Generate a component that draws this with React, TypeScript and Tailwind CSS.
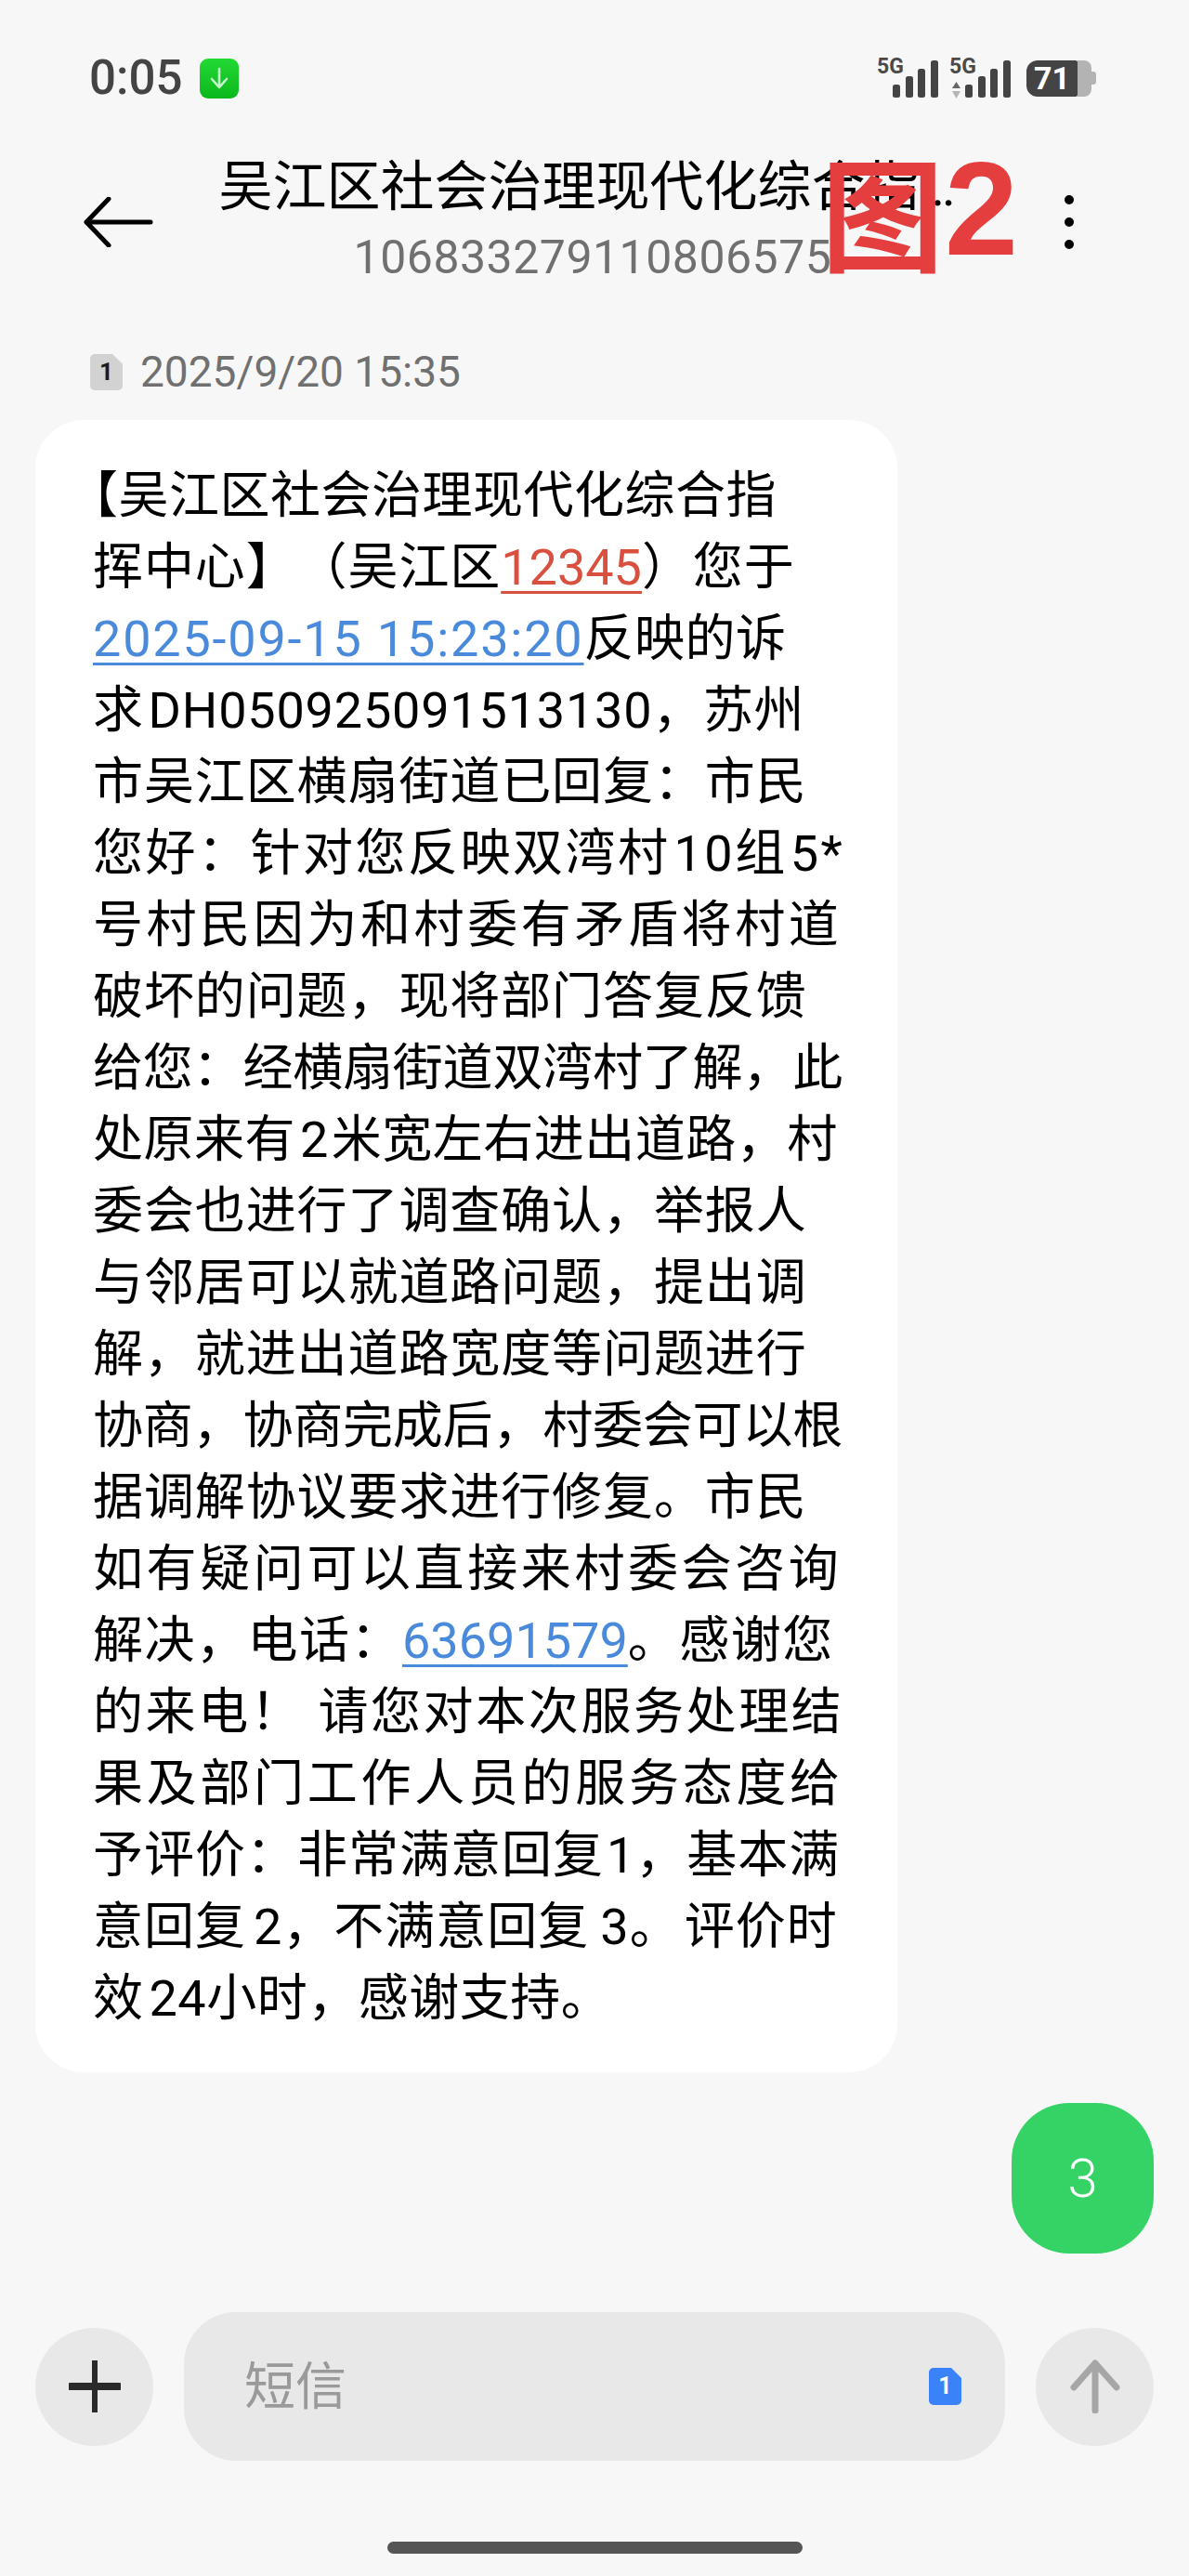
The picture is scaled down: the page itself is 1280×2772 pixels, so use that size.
const BODY_FONT = 'font-["Roboto","Noto_Sans_CJK_SC",sans-serif]'
const RED_LINK = 'text-[#d9503f] underline decoration-[3px] underline-offset-[7px] tracking-[0px]'
const BLUE_LINK = 'text-[#4a8ada] underline decoration-[3px] underline-offset-[7px]'

function Signal({ arrows }: { arrows?: boolean }) {
  return (
    <div className="relative h-[48px] w-[66px]">
      <span className="absolute left-0 top-0 font-['Roboto',sans-serif] text-[23px] font-bold leading-[24px] text-[#4a4a4a]">5G</span>
      {arrows && (
        <svg className="absolute left-[2px] top-[28px]" width="11" height="18" viewBox="0 0 11 18">
          <path d="M5.5 0L10 7H1z" fill="#666" />
          <path d="M5.5 18L10 10H1z" fill="#b5b5b5" />
        </svg>
      )}
      <svg className="absolute left-[17px] top-[5px]" width="49" height="40" viewBox="0 0 49 40">
        <rect x="0" y="26" width="8" height="14" rx="2.5" fill="#444" />
        <rect x="14" y="17" width="8" height="23" rx="2.5" fill="#444" />
        <rect x="27" y="9" width="8" height="31" rx="2.5" fill="#444" />
        <rect x="41" y="0" width="8" height="40" rx="2.5" fill="#444" />
      </svg>
    </div>
  )
}

function SimBadge({ bg, fg, w, h, size }: { bg: string; fg: string; w: number; h: number; size: number }) {
  return (
    <span className="relative inline-block" style={{ width: w, height: h }}>
      <svg className="absolute inset-0" width={w} height={h} viewBox="0 0 35 40" preserveAspectRatio="none">
        <path d="M5 0H24L35 11V35a5 5 0 0 1-5 5H5a5 5 0 0 1-5-5V5a5 5 0 0 1 5-5z" fill={bg} />
      </svg>
      <span
        className="absolute inset-0 flex items-center justify-center font-['Roboto',sans-serif] font-bold"
        style={{ color: fg, fontSize: size }}
      >
        1
      </span>
    </span>
  )
}

// the phone stretches some lines more than others, so each line has its own tracking
const lines: { cls: string; text: React.ReactNode }[] = [
  {
    cls: 'tracking-[0.5px]',
    text: (
      <>
        <span className="-ml-[27px]">【</span>吴江区社会治理现代化综合指
      </>
    ),
  },
  {
    cls: 'tracking-[0.9px]',
    text: (
      <>
        挥中心】（吴江区<span className={RED_LINK}>12345</span>）您于
      </>
    ),
  },
  {
    cls: 'tracking-[0.5px]',
    text: (
      <>
        <span className={`${BLUE_LINK} tracking-[1.8px]`}>2025-09-15 15:23:20</span>反映的诉
      </>
    ),
  },
  {
    cls: 'tracking-[0.6px]',
    text: (
      <>
        求<span className="ml-[5px] tracking-[0.8px]">DH050925091513130</span>，苏州
      </>
    ),
  },
  { cls: 'tracking-[0.9px]', text: '市吴江区横扇街道已回复：市民' },
  {
    cls: 'tracking-[2.5px]',
    text: (
      <>
        您好：针对您反映双湾村<span className="ml-[4px]">10</span>组<span className="ml-[3px]">5*</span>
      </>
    ),
  },
  { cls: 'tracking-[3.6px]', text: '号村民因为和村委有矛盾将村道' },
  { cls: 'tracking-[0.9px]', text: '破坏的问题，现将部门答复反馈' },
  { cls: 'tracking-[-0.2px]', text: '给您：经横扇街道双湾村了解，此' },
  {
    cls: 'tracking-[0.5px]',
    text: (
      <>
        处原来有<span className="ml-[5px] mr-[3px]">2</span>米宽左右进出道路，村
      </>
    ),
  },
  { cls: 'tracking-[0.9px]', text: '委会也进行了调查确认，举报人' },
  { cls: 'tracking-[0.9px]', text: '与邻居可以就道路问题，提出调' },
  { cls: 'tracking-[0.9px]', text: '解，就进出道路宽度等问题进行' },
  { cls: 'tracking-[-0.2px]', text: '协商，协商完成后，村委会可以根' },
  { cls: 'tracking-[0.9px]', text: '据调解协议要求进行修复。市民' },
  { cls: 'tracking-[3.6px]', text: '如有疑问可以直接来村委会咨询' },
  {
    cls: 'tracking-[1.5px]',
    text: (
      <>
        解决，电话：<span className={`${BLUE_LINK} tracking-[0px]`}>63691579</span>。感谢您
      </>
    ),
  },
  { cls: 'tracking-[2.6px]', text: '的来电！ 请您对本次服务处理结' },
  { cls: 'tracking-[3.7px]', text: '果及部门工作人员的服务态度给' },
  {
    cls: 'tracking-[1px]',
    text: (
      <>
        予评价：非常满意回复<span className="ml-[3px]">1</span>，基本满
      </>
    ),
  },
  {
    cls: 'tracking-[1px]',
    text: (
      <>
        意回复<span className="ml-[8px]">2</span>，不满意回复<span className="ml-[12px]">3</span>。<span className="ml-[4px]">评价时</span>
      </>
    ),
  },
  {
    cls: 'tracking-[0.5px]',
    text: (
      <>
        效<span className="ml-[6px]">24</span>小时，感谢支持。
      </>
    ),
  },
]

export default function App() {
  return (
    <div className={`relative flex min-h-[2772px] w-[1280px] flex-col overflow-hidden bg-[#f7f7f7] ${BODY_FONT}`}>
      {/* status bar */}
      <div className="mt-[60px] flex h-[48px] items-center justify-between pl-[96px] pr-[100px]">
        <div className="flex items-center gap-[19px]">
          <span className="font-['Roboto',sans-serif] text-[51px] font-medium leading-[48px] text-[#444]">0:05</span>
          <span className="flex h-[43px] w-[42px] items-center justify-center rounded-[9px] bg-gradient-to-b from-[#22d934] to-[#08b81a]">
            <svg width="22" height="26" viewBox="0 0 22 26" fill="none" stroke="#c9f7cd" strokeWidth="2.6" strokeLinecap="round" strokeLinejoin="round">
              <path d="M11 3V23M3 14L11 23L19 14" />
            </svg>
          </span>
        </div>
        <div className="flex items-center">
          <Signal />
          <div className="ml-[12px]">
            <Signal arrows />
          </div>
          <div className="ml-[17px] flex items-center">
            <span className="flex h-[39px] w-[55px] items-center justify-center rounded-l-[12px] rounded-r-[2px] bg-[#444] font-['Roboto',sans-serif] text-[34px] font-bold text-white">
              71
            </span>
            <span className="h-[39px] w-[15px] rounded-r-[8px] bg-[#b3b3b3]" />
            <span className="h-[14px] w-[5px] rounded-r-[3px] bg-[#b3b3b3]" />
          </div>
        </div>
      </div>

      {/* header */}
      <div className="mt-[57px] flex h-[148px] items-center pl-[90px] pr-[89px]">
        <svg width="75" height="54" viewBox="0 0 75 54" fill="none" stroke="#000" strokeWidth="5" strokeLinecap="round" strokeLinejoin="round">
          <path d="M3 27H72M27 2L3 27L27 52" />
        </svg>
        <div className="flex-1 text-center">
          <div className="h-[72px] whitespace-nowrap pr-[12px] text-[58px] leading-[72px] text-black">吴江区社会治理现代化综合指…</div>
          <div className="mt-[4px] h-[72px] whitespace-nowrap text-[50px] leading-[72px] tracking-[0.5px] text-[#707070]">106833279110806575</div>
        </div>
        <div className="flex w-[80px] flex-col items-center gap-[14px]">
          <span className="size-[10px] rounded-full bg-black" />
          <span className="size-[10px] rounded-full bg-black" />
          <span className="size-[10px] rounded-full bg-black" />
        </div>
      </div>

      {/* date */}
      <div className="mt-[62px] flex h-[50px] items-center gap-[19px] pl-[97px]">
        <SimBadge bg="#d2d2d2" fg="#1c1c1c" w={35} h={39} size={26} />
        <span className="text-[46px] leading-[50px] text-[#707070]">2025/9/20 15:35</span>
      </div>

      {/* received message */}
      <div className="ml-[38px] mt-[27px] w-[928px] rounded-[52px] bg-white pb-[41px] pl-[62px] pt-[43px] text-[54px] leading-[77px] text-black [text-spacing-trim:space-all]">
        {lines.map((line, i) => (
          <div key={i} className={`h-[77px] whitespace-nowrap ${line.cls}`}>
            {line.text}
          </div>
        ))}
      </div>

      {/* sent message */}
      <div className="mr-[38px] mt-[33px] flex h-[162px] w-[153px] items-center justify-center self-end rounded-[62px] bg-[#35d366] text-[58px] font-light text-white">
        3
      </div>

      {/* composer */}
      <div className="mt-[63px] flex items-center gap-[33px] px-[38px]">
        <div className="flex size-[127px] items-center justify-center rounded-full bg-[#e8e8e8]">
          <svg width="56" height="56" viewBox="0 0 56 56" fill="none" stroke="#2a2a2a" strokeLinecap="round">
            <path d="M28 1V55" strokeWidth="6" />
            <path d="M2 28H54" strokeWidth="8" />
          </svg>
        </div>
        <div className="flex h-[160px] w-[884px] items-center justify-between rounded-[56px] bg-[#e8e8e8] pl-[65px] pr-[47px]">
          <span className="text-[55px] text-[#9a9a9a]">短信</span>
          <SimBadge bg="#3a82f7" fg="#fff" w={35} h={40} size={25} />
        </div>
        <div className="flex size-[127px] items-center justify-center rounded-full bg-[#e8e8e8]">
          <svg width="54" height="58" viewBox="0 0 54 58" fill="none" stroke="#a6a6a6" strokeWidth="7" strokeLinecap="round" strokeLinejoin="round">
            <path d="M27 4V55M4 30L27 4L50 30" />
          </svg>
        </div>
      </div>

      {/* home indicator */}
      <div className="mx-auto mt-[87px] h-[13px] w-[447px] rounded-full bg-[#555]" />

      {/* 图2 stamp lying over the header */}
      <div className="absolute left-[884px] top-[150px] flex h-[150px] items-center font-['Noto_Sans_CJK_SC',sans-serif] font-bold leading-none text-[#e53e3e]">
        <span className="text-[132px]">图</span>
        <span className="ml-[1px] font-['Liberation_Sans',sans-serif] text-[142px]">2</span>
      </div>
    </div>
  )
}
